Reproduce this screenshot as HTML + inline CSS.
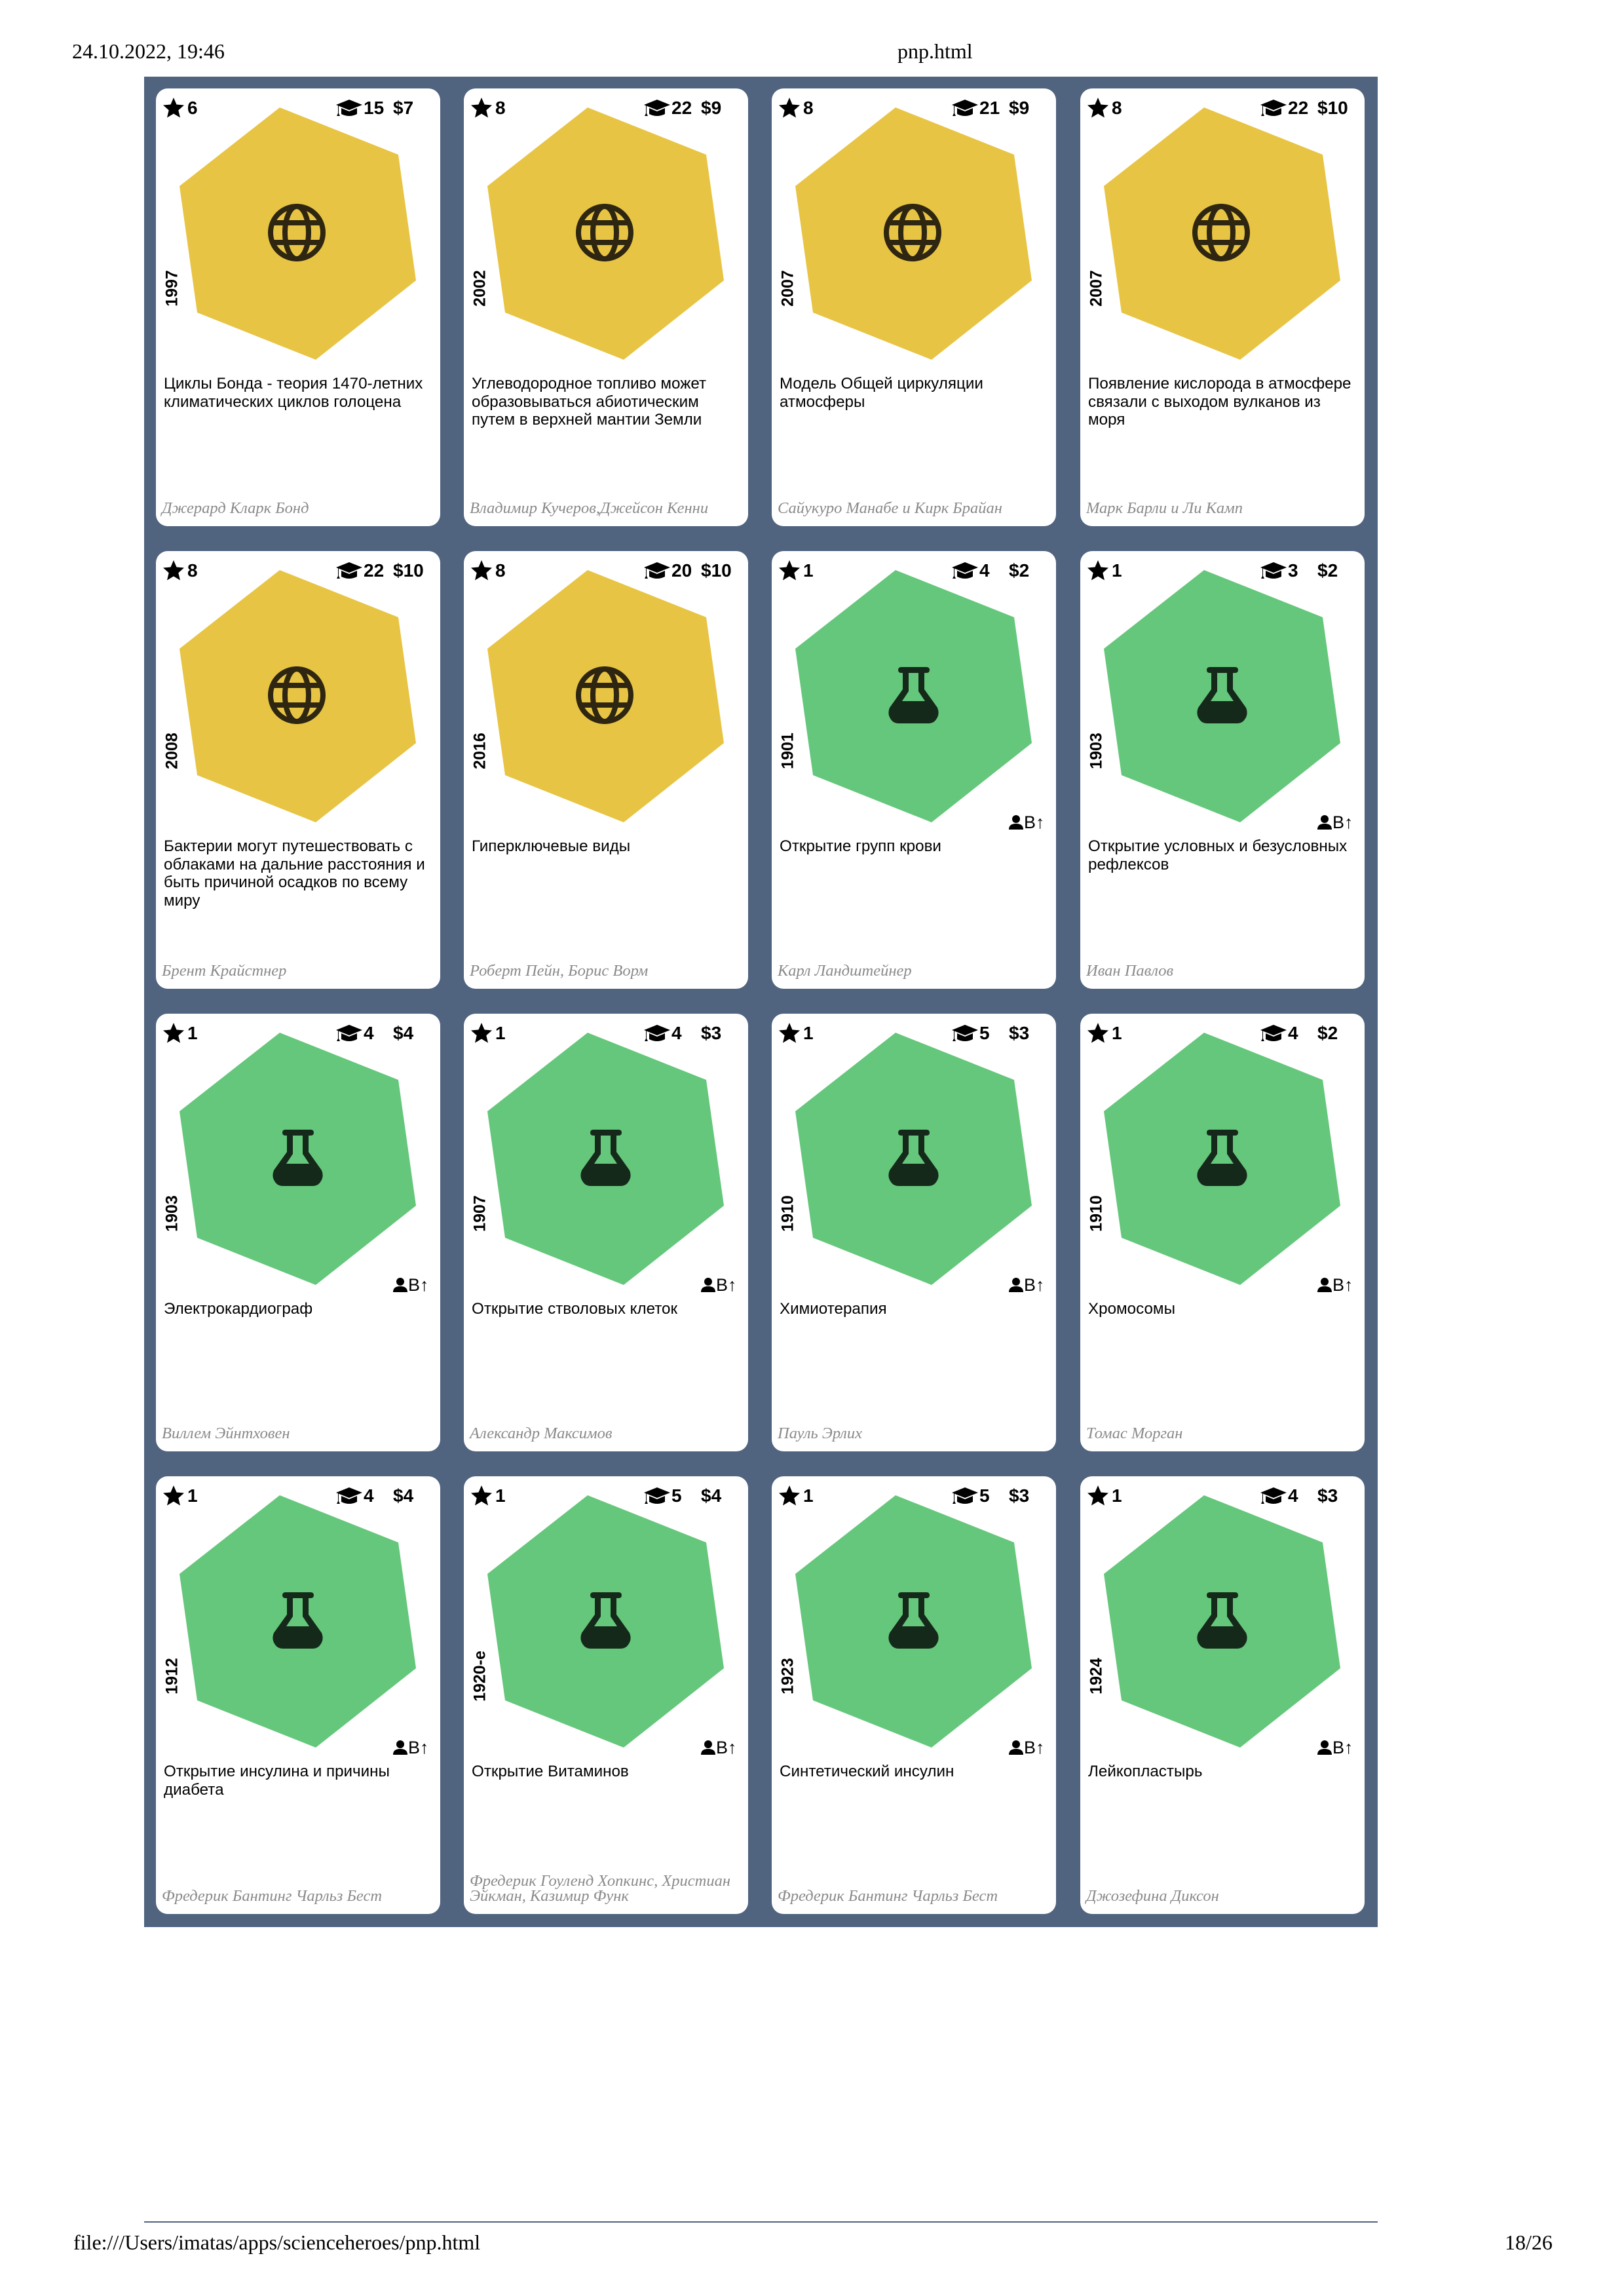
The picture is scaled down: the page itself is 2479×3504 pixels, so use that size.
<!DOCTYPE html>
<html><head><meta charset="utf-8">
<style>
html,body{margin:0;padding:0;background:#fff;}
body{width:2479px;height:3504px;position:relative;overflow:hidden;font-family:"Liberation Sans",sans-serif;}
.hdr{position:absolute;font-family:"Liberation Serif",serif;font-size:32px;color:#000;white-space:nowrap;}
.wrap{position:absolute;left:220px;top:117px;width:1883px;height:2824px;background:#50637f;}
.card{position:absolute;width:434px;height:668px;background:#fff;border-radius:18px;overflow:hidden;}
.card svg.g{position:absolute;left:0;top:0;}
.n{position:absolute;top:14px;font-weight:bold;font-size:28px;line-height:32px;color:#000;white-space:nowrap;}
.yr{position:absolute;left:25px;top:305px;font-weight:bold;font-size:25px;transform:translate(-50%,-50%) rotate(-90deg);white-space:nowrap;}
.d{position:absolute;left:12px;top:437px;font-size:24.2px;line-height:27.5px;color:#000;white-space:nowrap;}
.a{position:absolute;left:9px;bottom:16px;font-family:"Liberation Serif",serif;font-style:italic;font-size:24.5px;line-height:23px;color:#8a8a8a;white-space:nowrap;}
.b{position:absolute;left:385px;top:399px;font-size:27px;line-height:30px;white-space:nowrap;}
.b i{font-style:normal;font-weight:bold;}
</style></head><body>
<svg width="0" height="0" style="position:absolute">
<defs>
<polygon id="hex" points="189,29 370,101 397,293 244,414 63,342 36,149"/>
<g id="globe" fill="none" stroke="#2e2610" stroke-width="8">
<ellipse cx="215" cy="220" rx="40" ry="40"/>
<ellipse cx="215" cy="220" rx="18" ry="40"/>
<line x1="177" y1="205" x2="253" y2="205"/>
<line x1="177" y1="235" x2="253" y2="235"/>
</g>
<path id="flask" fill="#15291a" fill-rule="evenodd" transform="translate(178,177)" d="M20,0 L58,0 Q63,0 63,4.5 Q63,9 58,9 L55,9 L55,34 L75,62 Q79,72 73,80 Q69,86 61,86 L16,86 Q8,86 4,80 Q-2,72 2,62 L22,34 L22,9 L20,9 Q15,9 15,4.5 Q15,0 20,0 Z M31,9 L31,37 L21,52 L56,52 L46,37 L46,9 Z"/>
<path id="star" d="M16,0 L20.5,10.5 L32,11.5 L23.3,19.2 L26,30.5 L16,24.5 L6,30.5 L8.7,19.2 L0,11.5 L11.5,10.5 Z" fill="#000"/>
<g id="cap" fill="#000">
<path d="M20,0 L40,8 L20,16 L0,8 Z"/>
<path d="M8,13 L20,18 L32,13 L32,22 Q20,28 8,22 Z"/>
<path d="M3,9 L4,9 L4,21 L6,25 L1,25 L3,21 Z"/>
</g>
<g id="person" fill="#000">
<circle cx="11" cy="6" r="6"/>
<path d="M0,22 Q0,13 11,13 Q22,13 22,22 Z"/>
</g>
</defs>
</svg>

<div class="hdr" style="left:110px;top:60px;">24.10.2022, 19:46</div>
<div class="hdr" style="left:1370px;top:60px;">pnp.html</div>

<div class="wrap"></div>

<!-- Row 1 -->
<div class="card" style="left:238px;top:135px;">
<svg class="g" width="434" height="668"><use href="#hex" fill="#e8c444"/><use href="#globe"/><use href="#star" x="11" y="14"/><use href="#cap" x="275" y="17"/></svg>
<div class="n" style="left:48px;">6</div><div class="n" style="left:317px;">15</div><div class="n" style="left:362px;">$7</div>
<div class="yr">1997</div>
<div class="d">Циклы Бонда - теория 1470-летних<br>климатических циклов голоцена</div>
<div class="a">Джерард Кларк Бонд</div>
</div>
<div class="card" style="left:708px;top:135px;">
<svg class="g" width="434" height="668"><use href="#hex" fill="#e8c444"/><use href="#globe"/><use href="#star" x="11" y="14"/><use href="#cap" x="275" y="17"/></svg>
<div class="n" style="left:48px;">8</div><div class="n" style="left:317px;">22</div><div class="n" style="left:362px;">$9</div>
<div class="yr">2002</div>
<div class="d">Углеводородное топливо может<br>образовываться абиотическим<br>путем в верхней мантии Земли</div>
<div class="a">Владимир Кучеров,Джейсон Кенни</div>
</div>
<div class="card" style="left:1178px;top:135px;">
<svg class="g" width="434" height="668"><use href="#hex" fill="#e8c444"/><use href="#globe"/><use href="#star" x="11" y="14"/><use href="#cap" x="275" y="17"/></svg>
<div class="n" style="left:48px;">8</div><div class="n" style="left:317px;">21</div><div class="n" style="left:362px;">$9</div>
<div class="yr">2007</div>
<div class="d">Модель Общей циркуляции<br>атмосферы</div>
<div class="a">Сайукуро Манабе и Кирк Брайан</div>
</div>
<div class="card" style="left:1649px;top:135px;">
<svg class="g" width="434" height="668"><use href="#hex" fill="#e8c444"/><use href="#globe"/><use href="#star" x="11" y="14"/><use href="#cap" x="275" y="17"/></svg>
<div class="n" style="left:48px;">8</div><div class="n" style="left:317px;">22</div><div class="n" style="left:362px;">$10</div>
<div class="yr">2007</div>
<div class="d">Появление кислорода в атмосфере<br>связали с выходом вулканов из<br>моря</div>
<div class="a">Марк Барли и Ли Камп</div>
</div>

<!-- Row 2 -->
<div class="card" style="left:238px;top:841px;">
<svg class="g" width="434" height="668"><use href="#hex" fill="#e8c444"/><use href="#globe"/><use href="#star" x="11" y="14"/><use href="#cap" x="275" y="17"/></svg>
<div class="n" style="left:48px;">8</div><div class="n" style="left:317px;">22</div><div class="n" style="left:362px;">$10</div>
<div class="yr">2008</div>
<div class="d">Бактерии могут путешествовать с<br>облаками на дальние расстояния и<br>быть причиной осадков по всему<br>миру</div>
<div class="a">Брент Крайстнер</div>
</div>
<div class="card" style="left:708px;top:841px;">
<svg class="g" width="434" height="668"><use href="#hex" fill="#e8c444"/><use href="#globe"/><use href="#star" x="11" y="14"/><use href="#cap" x="275" y="17"/></svg>
<div class="n" style="left:48px;">8</div><div class="n" style="left:317px;">20</div><div class="n" style="left:362px;">$10</div>
<div class="yr">2016</div>
<div class="d">Гиперключевые виды</div>
<div class="a">Роберт Пейн, Борис Ворм</div>
</div>
<div class="card" style="left:1178px;top:841px;">
<svg class="g" width="434" height="668"><use href="#hex" fill="#65c77b"/><use href="#flask"/><use href="#star" x="11" y="14"/><use href="#cap" x="275" y="17"/><use href="#person" x="362" y="403"/></svg>
<div class="n" style="left:48px;">1</div><div class="n" style="left:317px;">4</div><div class="n" style="left:362px;">$2</div>
<div class="yr">1901</div>
<div class="b">B<i>↑</i></div>
<div class="d">Открытие групп крови</div>
<div class="a">Карл Ландштейнер</div>
</div>
<div class="card" style="left:1649px;top:841px;">
<svg class="g" width="434" height="668"><use href="#hex" fill="#65c77b"/><use href="#flask"/><use href="#star" x="11" y="14"/><use href="#cap" x="275" y="17"/><use href="#person" x="362" y="403"/></svg>
<div class="n" style="left:48px;">1</div><div class="n" style="left:317px;">3</div><div class="n" style="left:362px;">$2</div>
<div class="yr">1903</div>
<div class="b">B<i>↑</i></div>
<div class="d">Открытие условных и безусловных<br>рефлексов</div>
<div class="a">Иван Павлов</div>
</div>

<!-- Row 3 -->
<div class="card" style="left:238px;top:1547px;">
<svg class="g" width="434" height="668"><use href="#hex" fill="#65c77b"/><use href="#flask"/><use href="#star" x="11" y="14"/><use href="#cap" x="275" y="17"/><use href="#person" x="362" y="403"/></svg>
<div class="n" style="left:48px;">1</div><div class="n" style="left:317px;">4</div><div class="n" style="left:362px;">$4</div>
<div class="yr">1903</div>
<div class="b">B<i>↑</i></div>
<div class="d">Электрокардиограф</div>
<div class="a">Виллем Эйнтховен</div>
</div>
<div class="card" style="left:708px;top:1547px;">
<svg class="g" width="434" height="668"><use href="#hex" fill="#65c77b"/><use href="#flask"/><use href="#star" x="11" y="14"/><use href="#cap" x="275" y="17"/><use href="#person" x="362" y="403"/></svg>
<div class="n" style="left:48px;">1</div><div class="n" style="left:317px;">4</div><div class="n" style="left:362px;">$3</div>
<div class="yr">1907</div>
<div class="b">B<i>↑</i></div>
<div class="d">Открытие стволовых клеток</div>
<div class="a">Александр Максимов</div>
</div>
<div class="card" style="left:1178px;top:1547px;">
<svg class="g" width="434" height="668"><use href="#hex" fill="#65c77b"/><use href="#flask"/><use href="#star" x="11" y="14"/><use href="#cap" x="275" y="17"/><use href="#person" x="362" y="403"/></svg>
<div class="n" style="left:48px;">1</div><div class="n" style="left:317px;">5</div><div class="n" style="left:362px;">$3</div>
<div class="yr">1910</div>
<div class="b">B<i>↑</i></div>
<div class="d">Химиотерапия</div>
<div class="a">Пауль Эрлих</div>
</div>
<div class="card" style="left:1649px;top:1547px;">
<svg class="g" width="434" height="668"><use href="#hex" fill="#65c77b"/><use href="#flask"/><use href="#star" x="11" y="14"/><use href="#cap" x="275" y="17"/><use href="#person" x="362" y="403"/></svg>
<div class="n" style="left:48px;">1</div><div class="n" style="left:317px;">4</div><div class="n" style="left:362px;">$2</div>
<div class="yr">1910</div>
<div class="b">B<i>↑</i></div>
<div class="d">Хромосомы</div>
<div class="a">Томас Морган</div>
</div>

<!-- Row 4 -->
<div class="card" style="left:238px;top:2253px;">
<svg class="g" width="434" height="668"><use href="#hex" fill="#65c77b"/><use href="#flask"/><use href="#star" x="11" y="14"/><use href="#cap" x="275" y="17"/><use href="#person" x="362" y="403"/></svg>
<div class="n" style="left:48px;">1</div><div class="n" style="left:317px;">4</div><div class="n" style="left:362px;">$4</div>
<div class="yr">1912</div>
<div class="b">B<i>↑</i></div>
<div class="d">Открытие инсулина и причины<br>диабета</div>
<div class="a">Фредерик Бантинг Чарльз Бест</div>
</div>
<div class="card" style="left:708px;top:2253px;">
<svg class="g" width="434" height="668"><use href="#hex" fill="#65c77b"/><use href="#flask"/><use href="#star" x="11" y="14"/><use href="#cap" x="275" y="17"/><use href="#person" x="362" y="403"/></svg>
<div class="n" style="left:48px;">1</div><div class="n" style="left:317px;">5</div><div class="n" style="left:362px;">$4</div>
<div class="yr">1920-е</div>
<div class="b">B<i>↑</i></div>
<div class="d">Открытие Витаминов</div>
<div class="a">Фредерик Гоуленд Хопкинс, Христиан<br>Эйкман, Казимир Функ</div>
</div>
<div class="card" style="left:1178px;top:2253px;">
<svg class="g" width="434" height="668"><use href="#hex" fill="#65c77b"/><use href="#flask"/><use href="#star" x="11" y="14"/><use href="#cap" x="275" y="17"/><use href="#person" x="362" y="403"/></svg>
<div class="n" style="left:48px;">1</div><div class="n" style="left:317px;">5</div><div class="n" style="left:362px;">$3</div>
<div class="yr">1923</div>
<div class="b">B<i>↑</i></div>
<div class="d">Синтетический инсулин</div>
<div class="a">Фредерик Бантинг Чарльз Бест</div>
</div>
<div class="card" style="left:1649px;top:2253px;">
<svg class="g" width="434" height="668"><use href="#hex" fill="#65c77b"/><use href="#flask"/><use href="#star" x="11" y="14"/><use href="#cap" x="275" y="17"/><use href="#person" x="362" y="403"/></svg>
<div class="n" style="left:48px;">1</div><div class="n" style="left:317px;">4</div><div class="n" style="left:362px;">$3</div>
<div class="yr">1924</div>
<div class="b">B<i>↑</i></div>
<div class="d">Лейкопластырь</div>
<div class="a">Джозефина Диксон</div>
</div>

<div style="position:absolute;left:220px;top:3390px;width:1883px;height:2px;background:#50637f;"></div>
<div class="hdr" style="left:112px;top:3404px;">file:///Users/imatas/apps/scienceheroes/pnp.html</div>
<div class="hdr" style="left:2297px;top:3404px;">18/26</div>
</body></html>
